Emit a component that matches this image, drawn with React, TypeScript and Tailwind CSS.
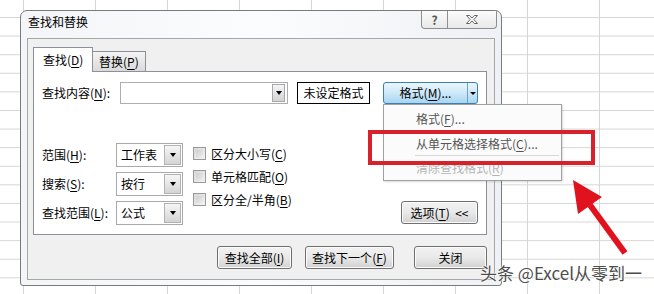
import React from "react";

const font = "font-['Noto_Sans_CJK_SC','Microsoft_YaHei',sans-serif]";

// small black triangle used in combo boxes
function Tri() {
  return (
    <span className="block w-0 h-0 border-l-[3.5px] border-r-[3.5px] border-t-[4px] border-l-transparent border-r-transparent border-t-black" />
  );
}

function Key({ label, k, rest = "" }: { label: string; k: string; rest?: string }) {
  return (
    <span>
      {label}(<u className="underline-offset-2">{k}</u>){rest}
    </span>
  );
}

function Select({ value }: { value: string }) {
  return (
    <div className="flex h-[24px] w-[67px] border border-[#a9a9a9] bg-white">
      <div className="flex-1 flex items-center pl-[4px] text-[12px] leading-none">{value}</div>
      <div className="w-[17px] my-[1px] mr-[1px] border border-[#b2b2b2] bg-gradient-to-b from-[#f6f6f6] to-[#d4d4d4] flex items-center justify-center">
        <Tri />
      </div>
    </div>
  );
}

function Check({ children }: { children: React.ReactNode }) {
  return (
    <div className="flex items-center h-[23px]">
      <span className="w-[13px] h-[13px] border border-[#9a9a9a] bg-gradient-to-br from-[#d8d8d8] to-[#f4f4f4] p-[2px]">
        <span className="block w-full h-full bg-gradient-to-br from-[#cfcfcf] to-[#ececec]" />
      </span>
      <span className="ml-[5px] text-[12px] leading-none">{children}</span>
    </div>
  );
}

function Button({ w, children, className = "" }: { w: string; children: React.ReactNode; className?: string }) {
  return (
    <div
      className={`${w} h-[23px] flex items-center justify-center rounded-[3px] border border-[#707070] bg-gradient-to-b from-[#f2f2f2] via-[#e9e9e9] to-[#d2d2d2] text-[12px] leading-none shadow-[inset_0_0_0_1px_#fbfbfb] ${className}`}
    >
      {children}
    </div>
  );
}

export default function App() {
  return (
    <div
      className={`relative w-[654px] h-[294px] overflow-hidden bg-white bg-[linear-gradient(to_right,#d6d6d6_1px,transparent_1px),linear-gradient(to_bottom,#d6d6d6_1px,transparent_1px)] bg-[size:72px_18.6px] bg-[position:23px_17px] pl-[20px] pt-[10px] text-black ${font}`}
    >
      {/* dialog window */}
      <div className="w-[482px] h-[276px] flex flex-col border border-[#7a7a7a] rounded-t-[7px] rounded-b-[3px] bg-gradient-to-r from-[#f3f5f8] via-[#fbfcfd] to-[#eef1f5] px-[6px] pb-[5px]">
        {/* title bar */}
        <div className="h-[27px] flex items-start justify-between">
          <span className="pl-[1px] pt-[5px] text-[12px] leading-none">查找和替换</span>
          <div className="flex -mr-[2px]">
            <div className="w-[27px] h-[18px] border border-t-0 border-[#8e8e8e] rounded-bl-[4px] bg-gradient-to-b from-[#fbfbfb] to-[#e9e9e9] flex items-center justify-center text-[12px] leading-none font-bold text-[#555]">
              ?
            </div>
            <div className="w-[49px] h-[18px] border border-t-0 border-l-0 border-[#8e8e8e] rounded-br-[4px] bg-gradient-to-b from-[#fbfbfb] to-[#e9e9e9] flex items-center justify-center">
              <svg width="14" height="11" viewBox="0 0 14 11">
                <path
                  d="M1.5 1.5h3.2L7 4.2l2.3-2.7h3.2L8.9 5.5l3.6 4H9.3L7 6.8 4.7 9.5H1.5l3.6-4z"
                  fill="#fff"
                  stroke="#666"
                  strokeWidth="1"
                  strokeLinejoin="round"
                />
              </svg>
            </div>
          </div>
        </div>

        {/* client area */}
        <div className="flex-1 border border-[#a7a7a7] bg-[#f0f0f0] pl-[5px] pr-[7px] pt-[8px]">
          {/* tabs */}
          <div className="flex items-end h-[24px] text-[12px] leading-none">
            <div className="relative z-10 w-[60px] h-[25px] -mb-[1px] border border-b-0 border-[#8d9099] bg-white flex items-center pl-[9px]">
              <Key label="查找" k="D" />
            </div>
            <div className="w-[53px] h-[20px] border border-l-0 border-b-0 border-[#8d9099] bg-gradient-to-b from-[#f4f4f4] to-[#dadada] flex items-center pl-[6px]">
              <Key label="替换" k="P" />
            </div>
          </div>

          {/* tab page */}
          <div className="h-[164px] border border-[#8d9099] bg-white pl-[8px] pr-[8px] pt-[10px] flex flex-col">
            <div className="flex items-center h-[22px] text-[12px] leading-none">
              <span className="w-[78px]">
                <Key label="查找内容" k="N" rest=":" />
              </span>
              <div className="w-[168px] h-[22px] border border-[#abadb3] bg-white flex items-center justify-end">
                <div className="w-[13px] h-[18px] mr-[2px] border border-[#a8a8a8] bg-gradient-to-b from-[#f5f5f5] to-[#d3d3d3] flex items-center justify-center">
                  <Tri />
                </div>
              </div>
              <div className="ml-[9px] w-[73px] h-[22px] border border-black bg-white flex items-center justify-center">
                未设定格式
              </div>
              <div className="ml-[13px] w-[95px] h-[22px] flex rounded-[3px] border border-[#3c7fb1] bg-gradient-to-b from-[#eaf6fd] via-[#cde8f8] to-[#a7d5f1]">
                <div className="flex-1 flex items-center justify-center">
                  <Key label="格式" k="M" rest="..." />
                </div>
                <div className="w-[10px] border-l border-[#6aa2c9] flex items-center justify-center">
                  <span className="block w-0 h-0 border-l-[3px] border-r-[3px] border-t-[3.5px] border-l-transparent border-r-transparent border-t-black" />
                </div>
              </div>
            </div>

            {/* options */}
            <div className="mt-[39px] flex">
              <div className="flex flex-col gap-[5px] text-[12px] leading-none">
                <div className="flex items-center">
                  <span className="w-[74px]">
                    <Key label="范围" k="H" rest=":" />
                  </span>
                  <Select value="工作表" />
                </div>
                <div className="flex items-center">
                  <span className="w-[74px]">
                    <Key label="搜索" k="S" rest=":" />
                  </span>
                  <Select value="按行" />
                </div>
                <div className="flex items-center">
                  <span className="w-[74px]">
                    <Key label="查找范围" k="L" rest=":" />
                  </span>
                  <Select value="公式" />
                </div>
              </div>
              <div className="ml-[10px] -mt-[1px] flex flex-col">
                <Check>
                  <Key label="区分大小写" k="C" />
                </Check>
                <Check>
                  <Key label="单元格匹配" k="O" />
                </Check>
                <Check>
                  <Key label="区分全/半角" k="B" />
                </Check>
              </div>
              <div className="flex-1 flex items-end justify-end">
                <Button w="w-[77px]" className="mb-[1px]">
                  <span>
                    选项(<u className="underline-offset-2">T</u>)&nbsp;&nbsp;&lt;&lt;
                  </span>
                </Button>
              </div>
            </div>
          </div>

          {/* bottom buttons */}
          <div className="mt-[11px] flex justify-end">
            <Button w="w-[75px]">
              <Key label="查找全部" k="I" />
            </Button>
            <Button w="w-[89px]" className="ml-[13px]">
              <Key label="查找下一个" k="F" />
            </Button>
            <Button w="w-[73px]" className="ml-[20px]">
              关闭
            </Button>
          </div>
        </div>
      </div>

      {/* dropdown menu of the format button */}
      <div className="absolute left-[383px] top-[104px] w-[179px] h-[77px] border border-[#a0a0a0] bg-[#fbfbfb] shadow-[1px_1px_2px_rgba(0,0,0,0.15)] text-[12px] leading-none">
        <div className="h-[26px] pl-[32px] pt-[8px] text-[#555]">
          <Key label="格式" k="F" rest="..." />
        </div>
        <div className="h-[24px] pl-[32px] pt-[7px] text-[#555]">
          <Key label="从单元格选择格式" k="C" rest="..." />
        </div>
        <div className="ml-[31px] mr-[2px] h-px bg-[#d7d7d7]" />
        <div className="pl-[32px] pt-[6px] text-[#b4b4b4]">
          <Key label="清除查找格式" k="R" />
        </div>
      </div>

      {/* red highlight */}
      <div className="absolute left-[368px] top-[130px] w-[227px] h-[35px] border-[4px] border-[#d7222b]" />

      {/* red arrow */}
      <svg className="absolute left-[560px] top-[170px]" width="80" height="90" viewBox="0 0 80 90">
        <line x1="30" y1="35" x2="65" y2="83" stroke="#e0121d" strokeWidth="6" />
        <polygon points="13,10 42,27 18,44" fill="#e0121d" />
      </svg>

      {/* watermark */}
      <div className="absolute left-[480px] top-[263px] text-[17px] leading-[20px] text-[#4d4d4d] [text-shadow:0_0_2px_#fff,0_0_2px_#fff,0_0_1px_#fff] whitespace-nowrap">
        头条 @Excel从零到一
      </div>
    </div>
  );
}
